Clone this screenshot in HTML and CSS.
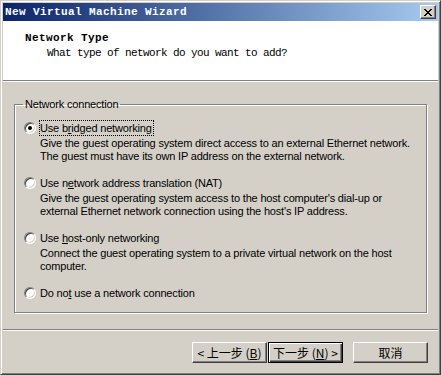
FILE: index.html
```html
<!DOCTYPE html>
<html lang="zh-CN">
<head>
  <meta charset="UTF-8" />
  <title>New Virtual Machine Wizard</title>
  <link rel="stylesheet" href="styles.css">
</head>
<body>
  <div class="window">
    <div class="titlebar">
      <span class="title">New Virtual Machine Wizard</span>
      <span class="close">
        <svg width="8" height="7" viewBox="0 0 8 7">
          <path d="M0 0h2v1h-2zM6 0h2v1h-2zM1 1h2v1h-2zM5 1h2v1h-2zM2 2h4v1h-4zM3 3h2v1h-2zM2 4h4v1h-4zM1 5h2v1h-2zM5 5h2v1h-2zM0 6h2v1h-2zM6 6h2v1h-2z" fill="#000"/>
        </svg>
      </span>
    </div>

    <div class="header">
      <div class="heading">Network Type</div>
      <div class="subheading">What type of network do you want to add?</div>
    </div>

    <div class="content">
      <fieldset class="group">
        <legend>Network connection</legend>

        <div class="option">
          <div class="option-label"><span class="radio checked"></span><span class="text focus">Use b<u>r</u>idged networking</span></div>
          <div class="desc">Give the guest operating system direct access to an external Ethernet network.<br>The guest must have its own IP address on the external network.</div>
        </div>

        <div class="option">
          <div class="option-label"><span class="radio"></span><span class="text">Use n<u>e</u>twork address translation (NAT)</span></div>
          <div class="desc">Give the guest operating system access to the host computer's dial-up or<br>external Ethernet network connection using the host's IP address.</div>
        </div>

        <div class="option">
          <div class="option-label"><span class="radio"></span><span class="text">Use <u>h</u>ost-only networking</span></div>
          <div class="desc">Connect the guest operating system to a private virtual network on the host<br>computer.</div>
        </div>

        <div class="option">
          <div class="option-label"><span class="radio"></span><span class="text">Do no<u>t</u> use a network connection</span></div>
        </div>
      </fieldset>
    </div>

    <div class="footer">
      <button class="btn">&lt; 上一步 (<u>B</u>)</button>
      <button class="btn default">下一步 (<u>N</u>) &gt;</button>
      <button class="btn cancel">取消</button>
    </div>
  </div>
</body>
</html>
```

FILE: styles.css
```css
* {
  box-sizing: border-box;
}

body {
  margin: 0;
  background: #d4d0c8;
  font-family: "Liberation Sans", Arial, sans-serif;
  font-size: 11px;
  letter-spacing: -0.18px;
  color: #000;
}

.window {
  width: 441px;
  height: 375px;
  background: #d4d0c8;
  border: 1px solid;
  border-color: #d4d0c8 #404040 #404040 #d4d0c8;
  box-shadow: inset 1px 1px 0 #fff, inset -1px -1px 0 #808080;
  padding: 2px;
  display: flex;
  flex-direction: column;
}

.titlebar {
  height: 18px;
  background: linear-gradient(to right, #0a246a, #a6caf0);
  display: flex;
  align-items: center;
  justify-content: space-between;
  padding: 0 2px 0 2px;
}

.title {
  color: #fff;
  font-family: "Liberation Mono", monospace;
  font-weight: bold;
  font-size: 11px;
  letter-spacing: 0.4px;
  white-space: nowrap;
}

.close {
  width: 16px;
  height: 14px;
  background: #d4d0c8;
  border: 1px solid;
  border-color: #fff #404040 #404040 #fff;
  box-shadow: inset -1px -1px 0 #808080;
  display: flex;
  align-items: center;
  justify-content: center;
  padding-right: 1px;
}

.close svg {
  display: block;
  shape-rendering: crispEdges;
}

.header {
  height: 59px;
  background: #fff;
  padding: 10px 0 0 22px;
  font-family: "Liberation Mono", monospace;
  font-size: 11px;
}

.heading {
  font-weight: bold;
  letter-spacing: 0.4px;
  line-height: 15px;
}

.subheading {
  padding-left: 22px;
  letter-spacing: -0.6px;
  line-height: 15px;
}

.content {
  border-top: 1px solid #808080;
  box-shadow: inset 0 1px 0 #fff;
  padding: 17px 11px 0 11px;
  flex: 1;
}

.group {
  margin: 0;
  padding: 9px 0 10px 0;
  border: 1px solid #808080;
  box-shadow: inset 1px 1px 0 #fff, 1px 1px 0 #fff;
  height: 215px;
}

.group legend {
  margin-left: 8px;
  padding: 0 2px;
  line-height: 13px;
}

.option {
  padding-left: 9px;
  margin-bottom: 12px;
}

.option-label {
  display: flex;
  align-items: center;
  height: 16px;
}

.radio {
  width: 12px;
  height: 12px;
  border-radius: 50%;
  background: #fff;
  border: 1px solid;
  border-color: #808080 #fff #fff #808080;
  box-shadow: inset 1px 1px 0 #404040, inset -1px -1px 0 #d4d0c8;
  margin-right: 3px;
  display: flex;
  align-items: center;
  justify-content: center;
}

.radio.checked::after {
  content: "";
  width: 4px;
  height: 4px;
  border-radius: 50%;
  background: #000;
}

.text {
  border: 1px solid transparent;
  line-height: 14px;
  padding-right: 1px;
  white-space: nowrap;
}

.text.focus {
  border: 1px dotted #000;
}

.desc {
  padding-left: 16px;
  line-height: 13px;
  white-space: nowrap;
  margin-top: 1px;
}

.footer {
  border-top: 1px solid #808080;
  box-shadow: inset 0 1px 0 #fff;
  padding: 12px 10px 9px 0;
  display: flex;
  justify-content: flex-end;
}

.btn {
  width: 75px;
  height: 21px;
  background: #d4d0c8;
  border: 1px solid;
  border-color: #fff #404040 #404040 #fff;
  box-shadow: inset -1px -1px 0 #808080;
  font-family: "Noto Sans CJK SC", sans-serif;
  font-size: 12px;
  letter-spacing: 0;
  line-height: 17px;
  padding: 0;
  color: #000;
  white-space: nowrap;
}

.btn u {
  text-underline-offset: 1px;
}

.btn.default {
  margin-left: 1px;
  border: 1px solid #000;
  box-shadow: inset 1px 1px 0 #fff, inset -1px -1px 0 #404040, inset -2px -2px 0 #808080;
}

.btn.cancel {
  margin-left: 10px;
}
```
